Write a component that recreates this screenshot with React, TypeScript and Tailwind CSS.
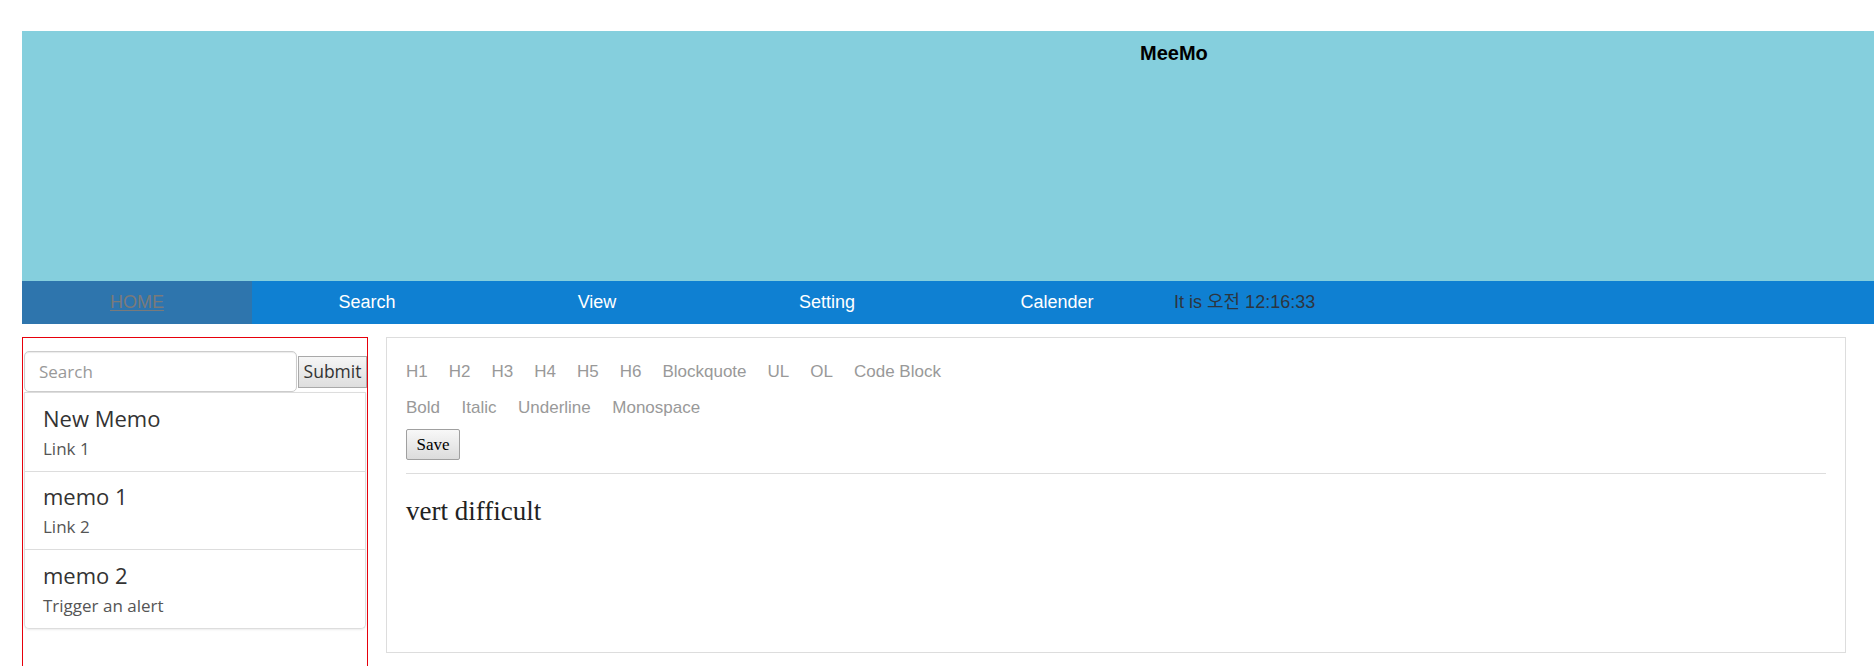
import React from 'react';

const navItems = ['Search', 'View', 'Setting', 'Calender'];

const memos = [
  { title: 'New Memo', sub: 'Link 1' },
  { title: 'memo 1', sub: 'Link 2' },
  { title: 'memo 2', sub: 'Trigger an alert' },
];

const blockTools = ['H1', 'H2', 'H3', 'H4', 'H5', 'H6', 'Blockquote', 'UL', 'OL', 'Code Block'];
const inlineTools = ['Bold', 'Italic', 'Underline', 'Monospace'];

export default function App() {
  return (
    <div className="min-h-[666px] overflow-hidden bg-white pt-[31px] pl-[22px] font-['Liberation_Sans',Arial,sans-serif]">
      {/* Jumbotron header */}
      <header className="h-[250px] bg-[#85cfdd] pt-[10px] pl-[1118px]">
        <h1 className="text-[20px] font-bold leading-[24px] text-black">MeeMo</h1>
      </header>

      {/* Nav bar */}
      <nav className="flex h-[43px] items-center bg-[#0f80d2] text-[18px]">
        <a className="flex h-full w-[230px] items-center justify-center bg-[#2e75ad] text-[#7a7a7a] underline underline-offset-2">
          HOME
        </a>
        {navItems.map((item) => (
          <a key={item} className="flex h-full w-[230px] items-center justify-center text-white">
            {item}
          </a>
        ))}
        <span className="pl-[2px] text-[#2d3540] font-['Liberation_Sans','Noto_Sans_CJK_KR',sans-serif]">
          It is 오전 12:16:33
        </span>
      </nav>

      <div className="flex gap-[18px] pt-[13px] pr-[28px]">
        {/* Sidebar */}
        <aside className="h-[345px] w-[346px] shrink-0 border border-red-600 font-['Open_Sans',sans-serif]">
          <form className="mt-[13px] flex items-center pl-px">
            <input
              type="text"
              placeholder="Search"
              className="h-[41px] w-[273px] rounded-[5px] border border-[#ccc] px-[14px] text-[17px] text-[#555] shadow-[inset_0_1px_1px_rgba(0,0,0,0.08)] outline-none placeholder:text-[#999]"
            />
            <button
              type="button"
              className="ml-px h-[32px] w-[69px] border border-[#a9a9a9] bg-gradient-to-b from-[#f6f6f6] to-[#dedede] text-[17.5px] leading-none text-[#333]"
            >
              Submit
            </button>
          </form>
          <div className="mx-px rounded-b-[5px] border border-t-0 border-[#ddd] shadow-[0_1px_2px_rgba(0,0,0,0.08)]">
            {memos.map((m) => (
              <div key={m.title} className="border-t border-[#ddd] px-[18px] pt-[12.5px] pb-[10px]">
                <div className="mb-[5px] text-[22px] leading-[25px] text-[#333]">{m.title}</div>
                <div className="text-[17px] leading-[25px] text-[#555]">{m.sub}</div>
              </div>
            ))}
          </div>
        </aside>

        {/* Editor */}
        <main className="h-[316px] flex-1 border border-[#ddd] px-[19px] pt-[16px]">
          <div className="flex h-[36px] items-center gap-[21px] text-[17px] text-[#999]">
            {blockTools.map((t) => (
              <span key={t}>{t}</span>
            ))}
          </div>
          <div className="flex h-[36px] items-center gap-[21.5px] text-[17px] text-[#999]">
            {inlineTools.map((t) => (
              <span key={t}>{t}</span>
            ))}
          </div>
          <button
            type="button"
            className="mt-[3px] h-[31px] w-[54px] rounded-[2px] border border-[#a0a0a0] bg-gradient-to-b from-[#f8f8f8] to-[#dcdcdc] font-['Liberation_Serif',serif] text-[17px] text-black"
          >
            Save
          </button>
          <hr className="mt-[13px] border-t border-[#ddd]" />
          <p className="mt-[22px] font-['Liberation_Serif',serif] text-[27px] leading-[30px] text-[#222]">
            vert difficult
          </p>
        </main>
      </div>
    </div>
  );
}
